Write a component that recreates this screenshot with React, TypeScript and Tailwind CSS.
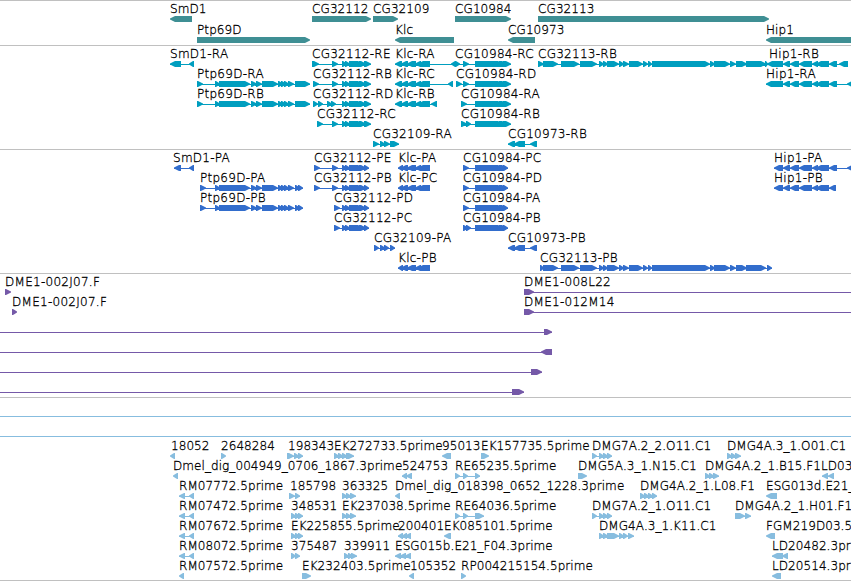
type Span = [number, number];

interface Feature {
  name?: string;
  // label position, when it differs from the start of the feature
  at?: number;
  dir: "left" | "right";
  spans: Span[];
  // intron line reaching past the first / last span
  from?: number;
  to?: number;
}

const VIEW_WIDTH = 851;

const right = (name: string, spans: Span[], extra: Partial<Feature> = {}): Feature => ({
  name,
  dir: "right",
  spans,
  ...extra,
});

const left = (name: string, spans: Span[], extra: Partial<Feature> = {}): Feature => ({
  name,
  dir: "left",
  spans,
  ...extra,
});

const ptp: Span[] = [[215, 220], [219, 250], [251, 257], [256, 262], [262, 278], [278, 283], [281, 286], [284, 289], [288, 294]];
const cg32112: Span[] = [[342, 347], [345, 350], [349, 363], [359, 366]];
const klc: Span[] = [[401, 408], [407, 416], [415, 421], [418, 430]];
const cg10984: Span[] = [[475, 503], [499, 507]];
const cg10973: Span[] = [[508, 515], [514, 525], [530, 537]];
const cg32113: Span[] = [
  [543, 558], [561, 579], [580, 597], [599, 604], [603, 608], [607, 619], [619, 624], [623, 629],
  [629, 643], [643, 648], [648, 652], [652, 710], [710, 715], [714, 730], [730, 736], [736, 747], [746, 766],
];
const hip1: Span[] = [[783, 790], [790, 799], [799, 812], [812, 818], [816, 829]];

const genes: Feature[][] = [
  [
    left("SmD1", [[170, 192]]),
    right("CG32112", [[312, 371]]),
    right("CG32109", [[373, 398]]),
    right("CG10984", [[455, 511]]),
    right("CG32113", [[538, 769]]),
  ],
  [
    right("Ptp69D", [[197, 310]]),
    left("Klc", [[395, 454]]),
    left("CG10973", [[508, 535]]),
    left("Hip1", [[766, 870]]),
  ],
];

const transcripts: Feature[][] = [
  [
    left("SmD1-RA", [[170, 181], [189, 194]]),
    right("CG32112-RE", [[312, 319], [332, 338], ...cg32112, [364, 371]]),
    left("Klc-RA", [[395, 402], ...klc, [451, 456]]),
    right("CG10984-RC", [[455, 460], [463, 469], ...cg10984, [503, 511]]),
    right("CG32113-RB", [[538, 544], ...cg32113, [765, 768]]),
    left("Hip1-RB", [[767, 783], ...hip1, [829, 837], [839, 848]], { at: 769 }),
  ],
  [
    right("Ptp69D-RA", [[197, 203], ...ptp, [295, 310]]),
    right("CG32112-RB", [[313, 319], [332, 338], ...cg32112, [364, 371]]),
    left("Klc-RC", [[395, 402], ...klc, [448, 453]]),
    right("CG10984-RD", [[456, 462], [463, 469], ...cg10984, [503, 511]]),
    left("Hip1-RA", [[766, 783], ...hip1, [829, 837], [847, 860]]),
  ],
  [
    right("Ptp69D-RB", [[197, 203], ...ptp, [295, 310]]),
    right("CG32112-RD", [[313, 318], [318, 323], [327, 332], [331, 336], ...cg32112, [364, 371]]),
    left("Klc-RB", [[395, 402], ...klc, [431, 437]]),
    right("CG10984-RA", [[461, 467], ...cg10984, [503, 511]]),
  ],
  [
    right("CG32112-RC", [[317, 323], [332, 338], ...cg32112, [364, 371]]),
    right("CG10984-RB", [[461, 467], [466, 471], ...cg10984, [503, 511]]),
  ],
  [
    right("CG32109-RA", [[373, 379], [380, 385], [384, 390], [390, 399]]),
    left("CG10973-RB", cg10973),
  ],
];

const proteins: Feature[][] = [
  [
    left("SmD1-PA", [[174, 181], [189, 194]], { at: 173 }),
    right("CG32112-PE", [[314, 320], [332, 338], ...cg32112, [364, 369]]),
    left("Klc-PA", [[398, 403], ...klc]),
    right("CG10984-PC", [[463, 469], ...cg10984, [503, 508]]),
    left("Hip1-PA", [[774, 783], ...hip1, [829, 837], [847, 860]]),
  ],
  [
    right("Ptp69D-PA", [[200, 206], ...ptp, [295, 300], [298, 303]]),
    right("CG32112-PB", [[314, 320], [332, 338], ...cg32112, [364, 369]]),
    left("Klc-PC", [[398, 403], ...klc]),
    right("CG10984-PD", [[463, 469], ...cg10984, [503, 508]]),
    left("Hip1-PB", [[774, 783], ...hip1, [829, 836]]),
  ],
  [
    right("Ptp69D-PB", [[200, 206], ...ptp, [295, 300], [298, 303]]),
    right("CG32112-PD", [[334, 340], ...cg32112, [364, 369]]),
    right("CG10984-PA", [[463, 469], ...cg10984, [503, 508]]),
  ],
  [
    right("CG32112-PC", [[334, 340], ...cg32112, [364, 369]]),
    right("CG10984-PB", [[463, 468], [466, 471], ...cg10984, [503, 508]]),
  ],
  [
    right("CG32109-PA", [[374, 379], [380, 385], [384, 389], [390, 395]]),
    left("CG10973-PB", cg10973),
  ],
  [
    left("Klc-PB", [[398, 403], ...klc]),
    right("CG32113-PB", [[540, 544], ...cg32113, [767, 772]]),
  ],
];

const clones: Feature[][] = [
  [
    right("DME1-002J07.F", [[5, 11]]),
    right("DME1-008L22", [[524, 534]], { to: VIEW_WIDTH }),
  ],
  [
    right("DME1-002J07.F", [[12, 17]]),
    right("DME1-012M14", [[524, 534]], { to: VIEW_WIDTH }),
  ],
  [{ dir: "right", spans: [[544, 552]], from: 0 }],
  [{ dir: "left", spans: [[541, 552]], from: 0 }],
  [{ dir: "right", spans: [[531, 542]], from: 0 }],
  [{ dir: "right", spans: [[512, 524]], from: 0 }],
];

const ests: Feature[][] = [
  [{ dir: "right", spans: [], from: 0, to: VIEW_WIDTH }],
  [{ dir: "right", spans: [], from: 0, to: VIEW_WIDTH }],
  [
    left("18052", [[170, 175]], { at: 171 }),
    right("2648284", [[221, 226]]),
    right("198343", [[287, 294], [294, 299], [298, 303]], { at: 288 }),
    right("EK272733.5prime", [[334, 339], [338, 343], [342, 347], [346, 354]]),
    left("95013", [[442, 451]]),
    right("EK157735.5prime", [[481, 489]]),
    right("DMG7A.2_2.O11.C1", [[592, 597], [599, 604], [603, 608], [607, 612]]),
    right("DMG4A.3_1.O01.C1", [[727, 732], [731, 736], [735, 741]]),
  ],
  [
    left("Dmel_dig_004949_0706_1867.3prime", [[173, 178]]),
    left("524753", [[402, 407], [406, 412]]),
    right("RE65235.5prime", [[455, 460], [463, 468], [475, 480]]),
    right("DMG5A.3_1.N15.C1", [[578, 587]]),
    right("DMG4A.2_1.B15.F1", [[705, 710], [709, 714], [713, 719]]),
    left("LD03", [[822, 828], [828, 834]], { at: 821 }),
  ],
  [
    left("RM07772.5prime", [[179, 185], [189, 194]]),
    right("185798", [[289, 295], [295, 300]], { at: 290 }),
    right("363325", [[342, 347], [346, 351], [350, 356]]),
    left("Dmel_dig_018398_0652_1228.3prime", [[395, 400]]),
    right("DMG4A.2_1.L08.F1", [[640, 645], [644, 649], [648, 653], [652, 657]]),
    left("ESG013d.E21_", [[766, 777]]),
  ],
  [
    left("RM07472.5prime", [[179, 185], [189, 194]]),
    right("348531", [[291, 296], [295, 300], [298, 303]]),
    right("EK237038.5prime", [[342, 347], [346, 351], [350, 356]]),
    right("RE64036.5prime", [[455, 460], [463, 468], [475, 484]]),
    right("DMG7A.2_1.O11.C1", [[592, 597], [599, 604], [603, 608], [607, 612]]),
    right("DMG4A.2_1.H01.F1", [[735, 745], [745, 751]]),
  ],
  [
    left("RM07672.5prime", [[179, 185], [189, 194]]),
    right("EK225855.5prime", [[291, 296], [295, 300], [298, 303]]),
    left("200401", [[398, 403], [402, 407], [405, 411]]),
    left("EK085101.5prime", [[444, 451]]),
    right("DMG4A.3_1.K11.C1", [[599, 604], [603, 608], [607, 619], [619, 624], [623, 628], [628, 634]]),
    left("FGM219D03.5", [[766, 775]]),
  ],
  [
    left("RM08072.5prime", [[179, 185], [189, 194]]),
    right("375487", [[291, 296], [295, 300]]),
    right("339911", [[344, 349], [348, 353], [351, 357]]),
    left("ESG015b.E21_F04.3prime", [[395, 401], [400, 406], [405, 411]]),
    left("LD20482.3pr", [[772, 783], [782, 788]]),
  ],
  [
    left("RM07572.5prime", [[179, 184]]),
    right("EK232403.5prime", [[302, 311]]),
    left("105352", [[409, 414]], { at: 410 }),
    right("RP004215154.5prime", [[461, 466]]),
    left("LD20514.3pr", [[772, 781]]),
  ],
];

function arrow([x0, x1]: Span, dir: Feature["dir"]) {
  const head = Math.min(6, x1 - x0);
  return dir === "right"
    ? `M${x0} 0H${x1 - head + 1}L${x1} 2.5V3.5L${x1 - head + 1} 6H${x0}Z`
    : `M${x1} 0H${x0 + head - 1}L${x0} 2.5V3.5L${x0 + head - 1} 6H${x1}Z`;
}

function Glyphs({ features }: { features: Feature[] }) {
  return (
    <svg width={VIEW_WIDTH} height={6} className="block fill-current">
      {features.map((f, i) => {
        const start = f.from ?? f.spans[0][0];
        const end = f.to ?? f.spans[f.spans.length - 1][1];
        return (
          <g key={i}>
            {(f.spans.length !== 1 || f.from !== undefined || f.to !== undefined) && (
              <rect x={start} y={3} width={end - start} height={1} />
            )}
            <path d={f.spans.map((s) => arrow(s, f.dir)).join("")} />
          </g>
        );
      })}
    </svg>
  );
}

interface TrackProps {
  rows: Feature[][];
  color: string;
  labelHeight?: string;
  className?: string;
}

function Track({ rows, color, labelHeight = "h-3.5", className = "pt-px pb-0.5 tracking-[0.27px]" }: TrackProps) {
  return (
    <section className={`border-t border-[#c0c0c0] ${className}`}>
      {rows.map((features, i) => (
        <div key={i} className={color}>
          <div className={`relative ${labelHeight}`}>
            {features.map(
              (f, j) =>
                f.name && (
                  <span
                    key={j}
                    className="absolute bottom-0 whitespace-nowrap text-[12px] font-extralight leading-[14px] text-black [-webkit-text-stroke:0.3px_black]"
                    style={{ left: f.at ?? f.spans[0][0] }}
                  >
                    {f.name}
                  </span>
                )
            )}
          </div>
          <Glyphs features={features} />
        </div>
      ))}
    </section>
  );
}

export default function App() {
  return (
    <main className="h-[581px] w-[851px] overflow-hidden bg-white font-['DejaVu_Sans',sans-serif]">
      <Track rows={genes} color="text-[#3f8f94]" labelHeight="h-[15px]" className="pb-0.5 tracking-[0.1px]" />
      <Track rows={transcripts} color="text-[#009ebf]" />
      <Track rows={proteins} color="text-[#326dcc]" />
      <Track rows={clones} color="text-[#7559a8]" />
      <Track rows={ests} color="text-[#87bddf]" className="border-b pt-px pb-px tracking-[0.07px]" />
    </main>
  );
}
